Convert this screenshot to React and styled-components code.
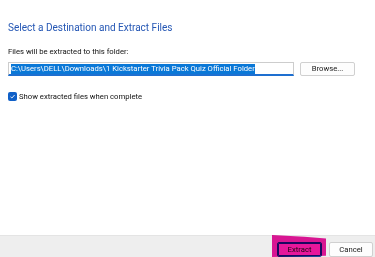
import styled, { createGlobalStyle } from "styled-components";

const GlobalStyle = createGlobalStyle`
  html, body {
    margin: 0;
    padding: 0;
    background: #fff;
  }
  body {
    font-family: Roboto, "Noto Sans", sans-serif;
    color: #000;
  }
`;

const Window = styled.div`
  width: 375px;
  height: 257px;
  display: flex;
  flex-direction: column;
  overflow: hidden;
`;

const Content = styled.div`
  flex: 1;
  padding: 22px 8px 0 8px;
  display: flex;
  flex-direction: column;
`;

const Title = styled.h1`
  margin: 0;
  font-size: 10px;
  font-weight: 400;
  color: #2456b4;
  line-height: 12px;
`;

const Label = styled.div`
  margin-top: 13px;
  font-size: 7.7px;
  line-height: 10px;
  color: #111;
`;

const PathRow = styled.div`
  margin-top: 5px;
  display: flex;
  align-items: center;
  gap: 6px;
`;

const PathInput = styled.div`
  width: 286px;
  height: 14px;
  box-sizing: border-box;
  border: 1px solid #cdcdcd;
  border-bottom: 2px solid #1e6fd0;
  padding: 0 0 0 2px;
  display: flex;
  align-items: center;
  font-size: 7.7px;
  white-space: nowrap;
  overflow: hidden;
`;

const Selected = styled.span`
  background: #0a78d7;
  color: #fff;
  line-height: 10px;
`;

const Button = styled.button`
  height: ${(p) => p.$height}px;
  width: ${(p) => p.$width}px;
  box-sizing: border-box;
  padding: 0;
  font-family: inherit;
  font-size: 7.7px;
  line-height: 10px;
  color: #1a1a1a;
  background: #fdfdfd;
  border: 1px solid ${(p) => (p.$focused ? "#1c4c9c" : "#d0d0d0")};
  border-radius: 2px;
  box-shadow: ${(p) => (p.$focused ? "inset 0 0 0 1px #1c4c9c" : "none")};
`;

const CheckRow = styled.label`
  margin-top: 16px;
  display: flex;
  align-items: center;
  gap: 2px;
  font-size: 7.7px;
  line-height: 9px;
  color: #111;
`;

const Box = styled.span`
  width: 9px;
  height: 9px;
  border-radius: 2px;
  background: #1060c8;
  display: flex;
  align-items: center;
  justify-content: center;
`;

const Footer = styled.div`
  height: 21px;
  background: #eeeeee;
  border-top: 1px solid #e4e4e4;
  display: flex;
  justify-content: flex-end;
  align-items: flex-end;
  gap: 7px;
  padding: 0 2px 0 0;
`;

const Highlight = styled.div`
  position: relative;
  display: flex;
`;

const Scribble = styled.div`
  position: absolute;
  left: -5px;
  top: -7px;
  right: -4px;
  bottom: 0;
  background: #e8179c;
  mix-blend-mode: multiply;
  clip-path: polygon(0 0, 60% 8%, 100% 16%, 100% 94%, 0 100%);
  pointer-events: none;
`;

export default function App() {
  return (
    <Window>
      <GlobalStyle />
      <Content>
        <Title>Select a Destination and Extract Files</Title>
        <Label>Files will be extracted to this folder:</Label>
        <PathRow>
          <PathInput>
            <Selected>
              C:\Users\DELL\Downloads\1 Kickstarter Trivia Pack Quiz Official Folder
            </Selected>
          </PathInput>
          <Button $width={55} $height={14}>Browse...</Button>
        </PathRow>
        <CheckRow>
          <Box>
            <svg width="7" height="7" viewBox="0 0 7 7">
              <path d="M1.5 3.8 L2.9 5 L5.6 2" fill="none" stroke="#fff" strokeWidth="0.9" />
            </svg>
          </Box>
          Show extracted files when complete
        </CheckRow>
      </Content>
      <Footer>
        <Highlight>
          <Button $width={45} $height={15} $focused>Extract</Button>
          <Scribble />
        </Highlight>
        <Button $width={44} $height={15}>Cancel</Button>
      </Footer>
    </Window>
  );
}
